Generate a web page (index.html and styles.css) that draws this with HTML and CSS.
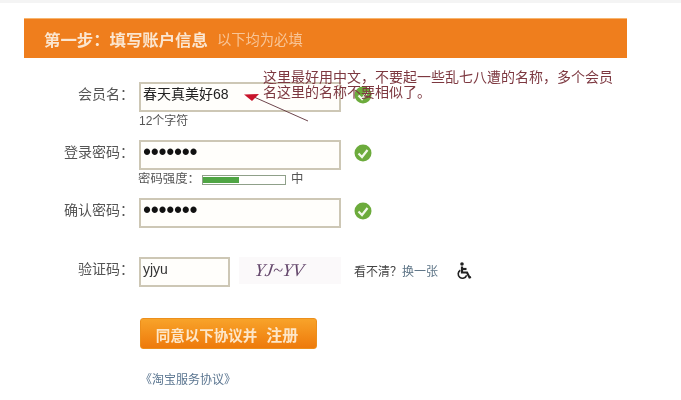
FILE: index.html
```html
<!DOCTYPE html>
<html lang="zh-CN">
<head>
<meta charset="utf-8">
<title>填写账户信息</title>
<link rel="stylesheet" href="styles.css">
</head>
<body>
<div class="topstrip"></div>
<main class="panel">
  <header class="banner">
    <h1 class="banner-title">第一步：填写账户信息</h1>
    <span class="banner-note">以下均为必填</span>
  </header>
  <form class="form">
    <div class="row">
      <label class="label">会员名：</label>
      <div class="field field-wide">春天真美好68</div>
      <svg class="ok" viewBox="0 0 18 18"><circle cx="9" cy="9" r="8.5"/><path d="M4.5 9.500 8 13 13.500 6"/></svg>
    </div>
    <div class="hint hint-first">12个字符</div>
    <div class="row">
      <label class="label">登录密码：</label>
      <div class="field field-wide dots">•••••••</div>
      <svg class="ok" viewBox="0 0 18 18"><circle cx="9" cy="9" r="8.5"/><path d="M4.5 9.500 8 13 13.500 6"/></svg>
    </div>
    <div class="hint hint-strength">
      <span>密码强度：</span>
      <span class="meter"><span class="meter-fill"></span></span>
      <span>中</span>
    </div>
    <div class="row">
      <label class="label">确认密码：</label>
      <div class="field field-wide dots">•••••••</div>
      <svg class="ok" viewBox="0 0 18 18"><circle cx="9" cy="9" r="8.5"/><path d="M4.5 9.500 8 13 13.500 6"/></svg>
    </div>
    <div class="row row-captcha">
      <label class="label">验证码：</label>
      <div class="field field-short">yjyu</div>
      <div class="captcha"><span class="captcha-text">YJ~YV</span></div>
      <span class="refresh">看不清？<a class="refresh-link">换一张</a></span>
      <svg class="wheelchair" viewBox="0 0 16 18"><circle cx="6" cy="2" r="1.8"/><path class="wc-line" d="M6 4.500V10.500H11L13.500 15.500 15 15"/><path class="wc-line" d="M6 7H10.500"/><path class="wc-thin" d="M4.300 8.200A4.300 4.300 0 1 0 10.600 13.200"/></svg>
    </div>
    <button class="submit" type="button">同意以下协议并<span class="submit-strong">注册</span></button>
    <a class="agreement">《淘宝服务协议》</a>
  </form>
  <svg class="arrow" viewBox="0 0 80 40"><path class="arrow-line" d="M66 30 12 6"/><path class="arrow-head" d="M2 3.500 17 3 10 10Z"/></svg>
  <p class="annotation">这里最好用中文，不要起一些乱七八遭的名称，多个会员<br>名这里的名称不要相似了。</p>
</main>
</body>
</html>
```
FILE: styles.css
```css
html, body { margin: 0; padding: 0; background: #fff; }
body {
  width: 681px;
  height: 400px;
  overflow: hidden;
  font-family: "Liberation Sans", "Noto Sans CJK SC", sans-serif;
  font-size: 14px;
  color: #444;
}
.topstrip { height: 3px; background: #f4f4f4; }
.panel { position: relative; margin: 15px 54px 0 24px; filter: blur(0.6px); }
.banner {
  height: 40px;
  box-sizing: border-box;
  display: flex;
  align-items: center;
  padding-left: 20px;
  background: #ef7e1d;
  border-top: 1px solid #f7b56e;
}
.banner-title {
  margin: 0;
  font-size: 16.4px;
  font-weight: bold;
  color: #fbe6d0;
}
.banner-note { margin-left: 9px; font-size: 14.3px; color: #f8c597; }
.form { display: flex; flex-direction: column; padding-top: 24px; }
.row { display: flex; align-items: center; height: 30px; }
.label {
  width: 110px;
  margin-right: 5px;
  padding-bottom: 8px;
  text-align: right;
  white-space: nowrap;
  font-size: 14px;
  color: #555;
}
.field {
  box-sizing: border-box;
  height: 30px;
  padding-left: 2px;
  line-height: 20px;
  border: 2px solid #cdc7b5;
  background: #fffefb;
  color: #222;
}
.field-wide { width: 202px; }
.field-short { width: 91px; color: #333; }
.dots { font-size: 23px; letter-spacing: -0.3px; color: #111; line-height: 21px; }
.ok { width: 18px; height: 18px; margin: 0 0 5px 13px; }
.ok circle { fill: #6cab3c; }
.ok path { fill: none; stroke: #f2f8ea; stroke-width: 2.2; }
.hint { height: 28px; margin-left: 115px; font-size: 12px; line-height: 18px; color: #555; }
.hint-strength { display: flex; align-items: flex-start; font-size: 12.4px; margin-left: 114px; }
.meter {
  box-sizing: border-box;
  width: 84px;
  height: 10px;
  margin: 5px 5px 0 2px;
  border: 1px solid #8fa08a;
  background: #fff;
}
.meter-fill { display: block; width: 36px; height: 6px; margin-top: 1px; background: #4fa544; }
.row-captcha { margin-top: 29px; }
.captcha {
  width: 102px;
  height: 27px;
  margin: -3px 0 0 9px;
  background: #fbf9fa;
  overflow: hidden;
  text-align: center;
}
.captcha-text {
  display: inline-block;
  margin-right: 22px;
  font-family: "Liberation Serif", serif;
  font-style: italic;
  font-size: 18px;
  line-height: 26px;
  color: #65486c;
  transform: skewX(-8deg);
}
.refresh { margin: 0 0 3px 13px; font-size: 12px; color: #444; white-space: nowrap; }
.refresh-link { color: #5d7486; }
.wheelchair { width: 16px; height: 18px; margin: 0 0 3px 18px; }
.wheelchair circle { fill: #222; }
.wc-line { fill: none; stroke: #222; stroke-width: 2.2; }
.wc-thin { fill: none; stroke: #222; stroke-width: 1.6; }
.submit {
  align-self: flex-start;
  width: 177px;
  height: 31px;
  margin: 31px 0 0 116px;
  padding: 0 3px 0 0;
  border: 1px solid #ec8f1c;
  border-radius: 3px;
  background: linear-gradient(#f8a32a, #ee7a0b);
  color: #fde6c8;
  font-family: inherit;
  font-size: 14.5px;
  font-weight: bold;
}
.submit-strong { margin-left: 9px; font-size: 16px; }
.agreement { margin: 21px 0 0 116px; font-size: 12px; color: #5a7590; }
.arrow { position: absolute; left: 218px; top: 73px; width: 80px; height: 40px; }
.arrow-line { fill: none; stroke: #5c3038; stroke-width: 0.9; }
.arrow-head { fill: #c8132a; }
.annotation {
  position: absolute;
  left: 239px;
  top: 52px;
  margin: 0;
  font-size: 14px;
  line-height: 15px;
  white-space: nowrap;
  color: #7d3840;
}
```
